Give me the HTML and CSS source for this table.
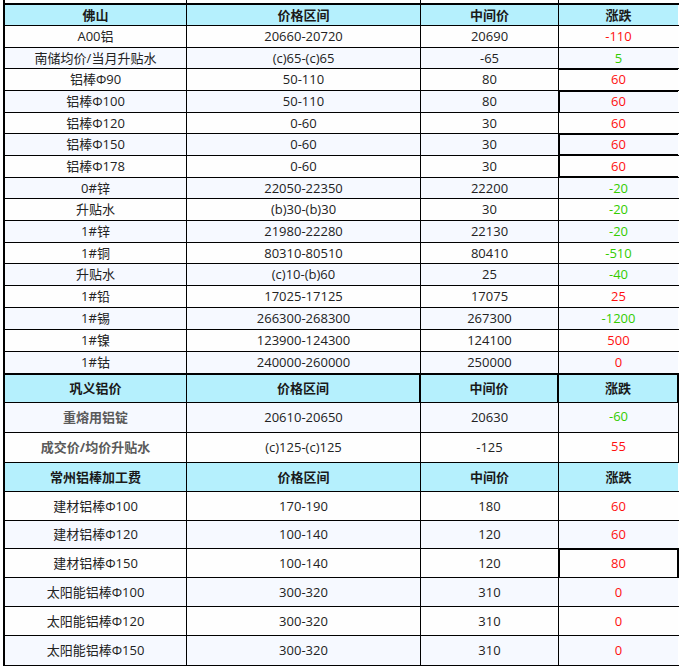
FILE: index.html
```html
<!DOCTYPE html>
<html lang="zh-CN">
<head>
<meta charset="utf-8">
<title>价格表</title>
<link rel="stylesheet" href="styles.css">
</head>
<body>
<div class="sheet">
  <div class="row stub"><div class="c"></div><div class="c"></div><div class="c"></div><div class="c c4"></div></div>

  <div class="row hd h21"><div class="c">佛山</div><div class="c">价格区间</div><div class="c">中间价</div><div class="c c4">涨跌</div></div>
  <div class="row w h22"><div class="c">A00铝</div><div class="c">20660-20720</div><div class="c">20690</div><div class="c c4 up">-110</div></div>
  <div class="row b h21"><div class="c">南储均价/当月升贴水</div><div class="c">(c)65-(c)65</div><div class="c">-65</div><div class="c c4 dn">5</div></div>
  <div class="row w h22"><div class="c">铝棒Φ90</div><div class="c">50-110</div><div class="c">80</div><div class="c c4 up tk-t">60</div></div>
  <div class="row b h22"><div class="c">铝棒Φ100</div><div class="c">50-110</div><div class="c">80</div><div class="c c4 up tk-tl">60</div></div>
  <div class="row w h21"><div class="c">铝棒Φ120</div><div class="c">0-60</div><div class="c">30</div><div class="c c4 up">60</div></div>
  <div class="row b h22"><div class="c">铝棒Φ150</div><div class="c">0-60</div><div class="c">30</div><div class="c c4 up tk-tlb">60</div></div>
  <div class="row w h22"><div class="c">铝棒Φ178</div><div class="c">0-60</div><div class="c">30</div><div class="c c4 up tk-lb">60</div></div>
  <div class="row b h21"><div class="c">0#锌</div><div class="c">22050-22350</div><div class="c">22200</div><div class="c c4 dn">-20</div></div>
  <div class="row w h22"><div class="c">升贴水</div><div class="c">(b)30-(b)30</div><div class="c">30</div><div class="c c4 dn">-20</div></div>
  <div class="row b h22"><div class="c">1#锌</div><div class="c">21980-22280</div><div class="c">22130</div><div class="c c4 dn">-20</div></div>
  <div class="row w h21"><div class="c">1#铜</div><div class="c">80310-80510</div><div class="c">80410</div><div class="c c4 dn">-510</div></div>
  <div class="row b h22"><div class="c">升贴水</div><div class="c">(c)10-(b)60</div><div class="c">25</div><div class="c c4 dn">-40</div></div>
  <div class="row w h22"><div class="c">1#铅</div><div class="c">17025-17125</div><div class="c">17075</div><div class="c c4 up">25</div></div>
  <div class="row b h22"><div class="c">1#锡</div><div class="c">266300-268300</div><div class="c">267300</div><div class="c c4 dn">-1200</div></div>
  <div class="row w h22"><div class="c">1#镍</div><div class="c">123900-124300</div><div class="c">124100</div><div class="c c4 up">500</div></div>
  <div class="row b h23 end"><div class="c">1#钴</div><div class="c">240000-260000</div><div class="c">250000</div><div class="c c4 up">0</div></div>

  <div class="row hd hd2 h28"><div class="c">巩义铝价</div><div class="c">价格区间</div><div class="c">中间价</div><div class="c c4">涨跌</div></div>
  <div class="row b h30 sec2"><div class="c name2">重熔用铝锭</div><div class="c">20610-20650</div><div class="c">20630</div><div class="c c4 dn lift">-60</div></div>
  <div class="row w h30 sec2"><div class="c name2">成交价/均价升贴水</div><div class="c">(c)125-(c)125</div><div class="c">-125</div><div class="c c4 up lift">55</div></div>

  <div class="row hd h29"><div class="c">常州铝棒加工费</div><div class="c">价格区间</div><div class="c">中间价</div><div class="c c4">涨跌</div></div>
  <div class="row w h29"><div class="c">建材铝棒Φ100</div><div class="c">170-190</div><div class="c">180</div><div class="c c4 up">60</div></div>
  <div class="row b h28"><div class="c">建材铝棒Φ120</div><div class="c">100-140</div><div class="c">120</div><div class="c c4 up">60</div></div>
  <div class="row w h29"><div class="c">建材铝棒Φ150</div><div class="c">100-140</div><div class="c">120</div><div class="c c4 up tk-box">80</div></div>
  <div class="row b h29"><div class="c">太阳能铝棒Φ100</div><div class="c">300-320</div><div class="c">310</div><div class="c c4 up">0</div></div>
  <div class="row w h29"><div class="c">太阳能铝棒Φ120</div><div class="c">300-320</div><div class="c">310</div><div class="c c4 up">0</div></div>
  <div class="row b h30"><div class="c">太阳能铝棒Φ150</div><div class="c">300-320</div><div class="c">310</div><div class="c c4 up">0</div></div>
</div>
</body>
</html>
```

FILE: styles.css
```css
* { box-sizing: border-box; }

body {
  margin: 0;
  background: #ffffff;
  font-family: "Open Sans", "Noto Sans CJK SC", sans-serif;
  font-size: 13px;
  color: #222222;
}

.sheet {
  margin-left: 3px;
  width: 676px;
  border-left: 2px solid #000;
}

.row {
  display: grid;
  grid-template-columns: 182px 234px 138px 120px;
  border-bottom: 1px solid #000;
}

.c {
  border-right: 1px solid #000;
  display: flex;
  align-items: center;
  justify-content: center;
  white-space: nowrap;
  line-height: 1;
}

.c4 { border-right-color: #ffffff; }

.stub { height: 5px; border-bottom-width: 2px; }
.stub .c { background: #fff; }

.h21 { height: 21px; }
.h22 { height: 22px; }
.h23 { height: 23px; }
.h28 { height: 28px; }
.h29 { height: 29px; }
.h30 { height: 30px; }

.end { border-bottom-width: 2px; }

.w .c { background: #fefefe; }
.b .c { background: #f6f9ff; }
.w .c4, .b .c4 { background-clip: padding-box; }

.hd .c {
  background: #b5f0fd;
  font-weight: bold;
  color: #1a1a1a;
}
.hd .c4 { background-clip: padding-box; }

.hd2 .c:nth-child(2),
.hd2 .c:nth-child(3) { border-right-width: 2px; }
.hd2 .c4 { border-right: 2px solid #000; }

.sec2 .c4 { border-right-color: #000; }

.name2 { font-weight: bold; color: #5a5a5a; }
.lift { padding-bottom: 3px; }

.up { color: #ff1010; }
.dn { color: #33cc00; }

.tk-t { box-shadow: inset 0 1px 0 #000; }
.tk-tl { box-shadow: inset 0 1px 0 #000, inset 1px 0 0 #000; }
.tk-tlb { box-shadow: inset 0 1px 0 #000, inset 1px 0 0 #000, inset 0 -1px 0 #000; }
.tk-lb { box-shadow: inset 1px 0 0 #000, inset 0 -1px 0 #000; }
.tk-box {
  border-right-color: #000 !important;
  box-shadow: inset 0 1px 0 #000, inset 1px 0 0 #000, inset -1px 0 0 #000;
}
```
